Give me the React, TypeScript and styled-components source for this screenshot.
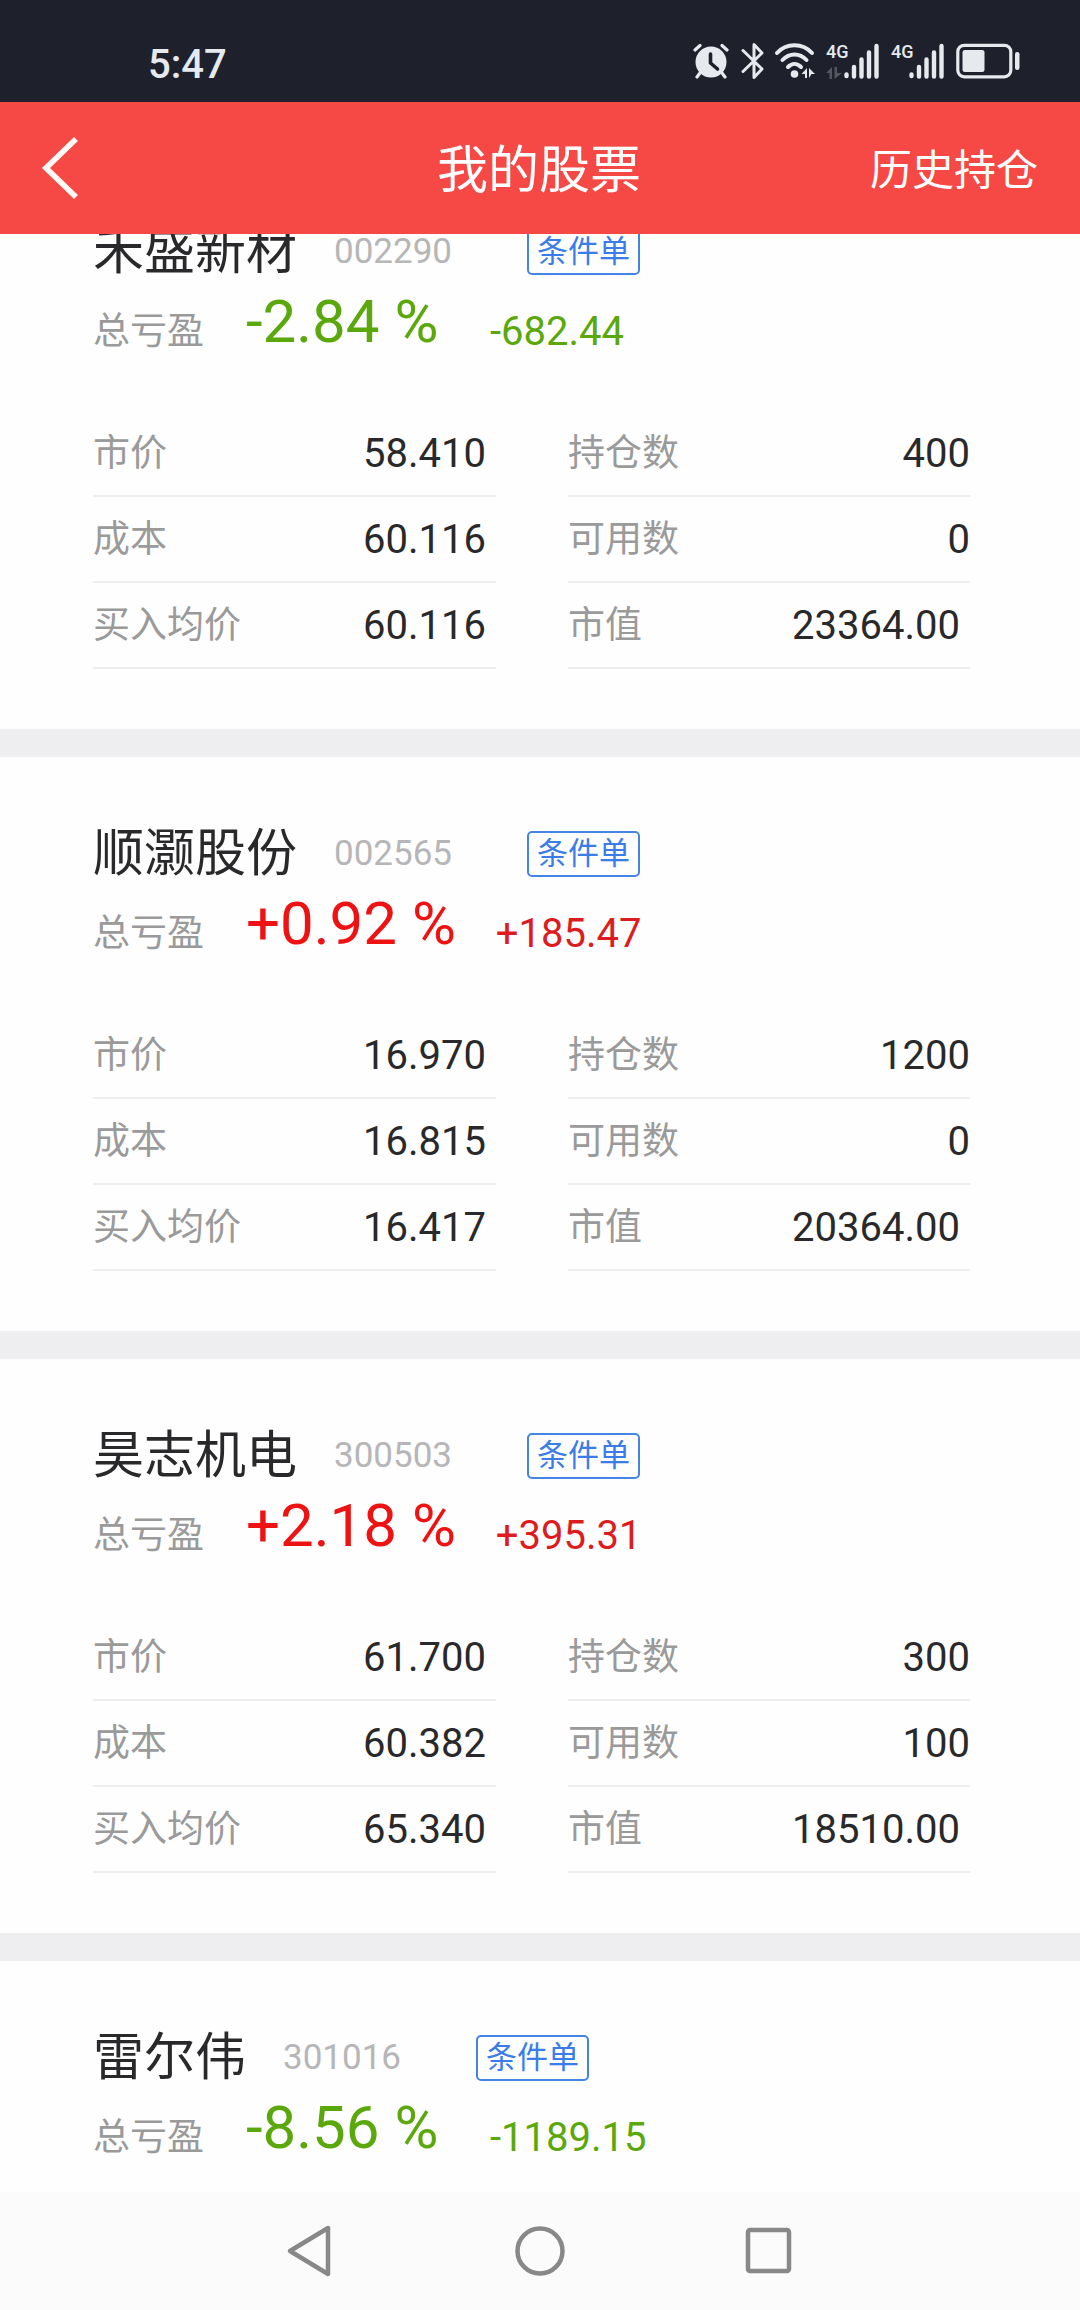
import React from "react";
import styled, { createGlobalStyle } from "styled-components";

const GlobalStyle = createGlobalStyle`
  * { box-sizing: border-box; }
  body { margin: 0; background: #fefefe; }
  button { margin: 0; padding: 0; border: 0; background: none; font: inherit; color: inherit; cursor: pointer; }
`;

const Screen = styled.div`
  display: flex;
  flex-direction: column;
  min-height: 100vh;
  font-family: Roboto, "Noto Sans CJK SC", sans-serif;
  color: #29292b;
`;

const Top = styled.div`
  position: sticky;
  top: 0;
  z-index: 1;
`;

const StatusBar = styled.div`
  display: flex;
  align-items: center;
  justify-content: space-between;
  height: 102px;
  padding: 24px 60px 0 148px;
  background: #1e212b;
  color: #e6eaef;
`;

const Clock = styled.span`
  padding-top: 4px;
  font-size: 40px;
  line-height: 52px;
  font-weight: 500;
`;

const StatusIcons = styled.div`
  display: flex;
  align-items: center;
  gap: 12px;
  padding-bottom: 4px;
`;

const Signal = styled.span`
  display: flex;
  align-items: flex-start;
  height: 36px;
`;

const NetworkStack = styled.span`
  display: flex;
  flex-direction: column;
  justify-content: space-between;
  height: 36px;
  width: 18px;
`;

const Network = styled.span`
  font-size: 18px;
  line-height: 18px;
  font-weight: 500;
`;

const Header = styled.header`
  display: grid;
  grid-template-columns: 1fr auto 1fr;
  align-items: center;
  height: 132px;
  padding: 0 42px 0 40px;
  background: #f64945;
  color: #fff;
`;

const BackButton = styled.button`
  justify-self: start;
  display: flex;
`;

const Title = styled.h1`
  margin: 0;
  padding-top: 6px;
  font-size: 51px;
  line-height: 68px;
  font-weight: 400;
`;

const HistoryButton = styled.button`
  && {
    justify-self: end;
    padding-top: 6px;
    font-size: 42px;
    line-height: 56px;
  }
`;

const List = styled.main`
  flex: 1;
  display: flex;
  flex-direction: column;
  gap: 28px;
  margin-top: -79px;
  background: #eeeef1;
`;

const Card = styled.article`
  padding: 63px 110px 60px 93px;
  background: #fefefe;

  &:last-child { flex: 1; padding-bottom: 24px; }
`;

const CardTitle = styled.div`
  display: flex;
  align-items: center;
  height: 68px;
`;

const Name = styled.h2`
  margin: 0;
  font-size: 51px;
  line-height: 68px;
  font-weight: 400;
`;

const Code = styled.span`
  margin: 0 75px 0 37px;
  font-size: 35px;
  line-height: 52px;
  color: #b6b6b8;
`;

const OrderButton = styled.button`
  && {
    height: 46px;
    padding: 0 8px;
    border: 2px solid #4484e4;
    border-radius: 5px;
    font-size: 31px;
    line-height: 42px;
    color: #3b7de8;
  }
`;

const Profit = styled.div`
  display: flex;
  align-items: flex-end;
  height: 72px;
`;

const Label = styled.span`
  font-size: 37px;
  line-height: 52px;
  color: #9a9a9a;
`;

const Percent = styled.strong<{ $up: boolean }>`
  min-width: 204px;
  margin: 0 40px 0 42px;
  font-size: 60px;
  line-height: 72px;
  font-weight: 400;
  color: ${(p) => (p.$up ? "#ee1212" : "#5ba80c")};
`;

const Amount = styled.span<{ $up: boolean }>`
  font-size: 40px;
  line-height: 52px;
  color: ${(p) => (p.$up ? "#dd1c1f" : "#5ba80c")};
`;

const Details = styled.div`
  display: grid;
  grid-template-columns: 403fr 402fr;
  column-gap: 72px;
  margin-top: 53px;
`;

const Fields = styled.dl`
  margin: 0;
`;

const Field = styled.div`
  display: flex;
  align-items: center;
  justify-content: space-between;
  height: 86px;
  padding-top: 2px;
  border-bottom: 2px solid #eeeeee;
`;

const Term = styled.dt`
  font-size: 37px;
  line-height: 52px;
  color: #9a9a9a;
`;

const Value = styled.dd<{ $inset?: boolean }>`
  margin: 0;
  padding-right: ${(p) => (p.$inset ? "10px" : "0")};
  font-size: 40px;
  line-height: 52px;
`;

const NavBar = styled.nav`
  position: sticky;
  bottom: 0;
  display: flex;
  align-items: center;
  justify-content: center;
  gap: 177px;
  height: 118px;
  background: #fbfbfb;
`;

const NavButton = styled.button`
  display: flex;
`;

type Stock = {
  name: string;
  code: string;
  percent: string;
  amount: string;
  price?: string;
  cost?: string;
  average?: string;
  held?: string;
  available?: string;
  worth?: string;
};

const stocks: Stock[] = [
  { name: "禾盛新材", code: "002290", percent: "-2.84 %", amount: "-682.44", price: "58.410", cost: "60.116", average: "60.116", held: "400", available: "0", worth: "23364.00" },
  { name: "顺灏股份", code: "002565", percent: "+0.92 %", amount: "+185.47", price: "16.970", cost: "16.815", average: "16.417", held: "1200", available: "0", worth: "20364.00" },
  { name: "昊志机电", code: "300503", percent: "+2.18 %", amount: "+395.31", price: "61.700", cost: "60.382", average: "65.340", held: "300", available: "100", worth: "18510.00" },
  { name: "雷尔伟", code: "301016", percent: "-8.56 %", amount: "-1189.15" },
];

function StockCard({ stock }: { stock: Stock }) {
  const up = stock.percent.startsWith("+");
  return (
    <Card>
      <CardTitle>
        <Name>{stock.name}</Name>
        <Code>{stock.code}</Code>
        <OrderButton>条件单</OrderButton>
      </CardTitle>
      <Profit>
        <Label>总亏盈</Label>
        <Percent $up={up}>{stock.percent}</Percent>
        <Amount $up={up}>{stock.amount}</Amount>
      </Profit>
      {stock.price && (
        <Details>
          <Fields>
            <Field><Term>市价</Term><Value $inset>{stock.price}</Value></Field>
            <Field><Term>成本</Term><Value $inset>{stock.cost}</Value></Field>
            <Field><Term>买入均价</Term><Value $inset>{stock.average}</Value></Field>
          </Fields>
          <Fields>
            <Field><Term>持仓数</Term><Value>{stock.held}</Value></Field>
            <Field><Term>可用数</Term><Value>{stock.available}</Value></Field>
            <Field><Term>市值</Term><Value $inset>{stock.worth}</Value></Field>
          </Fields>
        </Details>
      )}
    </Card>
  );
}

const AlarmIcon = () => (
  <svg width="36" height="36" viewBox="0 0 36 36" fill="none" strokeLinecap="round">
    <path d="M2 7l5-4.500M34 7l-5-4.500M7 30l-3 4M29 30l3 4" stroke="currentColor" strokeWidth="3.200" />
    <circle cx="18" cy="19" r="15.500" fill="currentColor" />
    <path d="M17.500 11v9l7 6" stroke="#1e212b" strokeWidth="3.600" strokeLinejoin="round" />
  </svg>
);

const BluetoothIcon = () => (
  <svg width="23" height="38" viewBox="0 0 23 38" fill="none" stroke="currentColor" strokeWidth="3" strokeLinecap="round" strokeLinejoin="round">
    <path d="M2 8.500L21 27 13 35.500V2.500L21 11 2 29.500" />
  </svg>
);

const WifiIcon = () => (
  <svg width="38" height="36" viewBox="1 0 38 36" overflow="visible" fill="none" stroke="currentColor" strokeWidth="4" strokeLinecap="round">
    <path d="M2 10C11-.5 28-.5 37 10M7.500 17C14.500 9.500 24.500 9.500 31.500 17M13 24c4-4 9-4 13 0" />
    <circle cx="19.500" cy="31" r="3.800" fill="currentColor" stroke="none" />
    <path d="M32 25v10h-2v-4h-3.500zM34 25l6 6h-3.500L34 35z" fill="currentColor" stroke="none" />
  </svg>
);

const BarsIcon = () => (
  <svg width="35" height="36" viewBox="0 0 35 36" fill="none" stroke="currentColor" strokeWidth="4.400" strokeLinecap="round">
    <path d="M2.500 31.500v1.500M10 24v9.500M17.500 16.500v17M25 9.500v24M32.500 3v30.500" />
  </svg>
);

const DataArrows = () => (
  <svg width="16" height="12" viewBox="0 0 16 12" fill="#54575e">
    <path d="M0 6l6-6v12H3.500V6zM8.500 0H11v6h5l-7.500 6z" />
  </svg>
);

const BatteryIcon = () => (
  <svg width="64" height="36" viewBox="0 0 64 36" fill="none">
    <rect x="1.800" y="2.300" width="53" height="31.500" rx="6.500" stroke="currentColor" strokeWidth="3.200" />
    <rect x="6.500" y="7" width="22" height="22" rx="2.500" fill="currentColor" />
    <rect x="59" y="9" width="4.500" height="18" rx="2.200" fill="currentColor" />
  </svg>
);

export default function App() {
  return (
    <Screen>
      <GlobalStyle />
      <Top>
        <StatusBar>
          <Clock>5:47</Clock>
          <StatusIcons>
            <AlarmIcon />
            <BluetoothIcon />
            <WifiIcon />
            <Signal>
              <NetworkStack><Network>4G</Network><DataArrows /></NetworkStack>
              <BarsIcon />
            </Signal>
            <Signal>
              <NetworkStack><Network>4G</Network></NetworkStack>
              <BarsIcon />
            </Signal>
            <BatteryIcon />
          </StatusIcons>
        </StatusBar>
        <Header>
          <BackButton aria-label="返回">
            <svg width="40" height="64" viewBox="0 0 40 64" fill="none" stroke="#fffaf5" strokeWidth="5.600">
              <path d="M36 3L6 32l30 29" />
            </svg>
          </BackButton>
          <Title>我的股票</Title>
          <HistoryButton>历史持仓</HistoryButton>
        </Header>
      </Top>
      <List>
        {stocks.map((s) => <StockCard key={s.code} stock={s} />)}
      </List>
      <NavBar>
        <NavButton aria-label="返回">
          <svg width="50" height="54" viewBox="0 0 50 54" fill="none" stroke="#888" strokeWidth="4.500" strokeLinejoin="round">
            <path d="M4 27L42 4v46z" />
          </svg>
        </NavButton>
        <NavButton aria-label="主页">
          <svg width="54" height="54" viewBox="0 0 54 54" fill="none" stroke="#888" strokeWidth="4.500">
            <circle cx="27" cy="27" r="22.500" />
          </svg>
        </NavButton>
        <NavButton aria-label="最近任务">
          <svg width="50" height="54" viewBox="0 0 50 54" fill="none" stroke="#888" strokeWidth="4.500">
            <rect x="4" y="6" width="41" height="41" rx="2" />
          </svg>
        </NavButton>
      </NavBar>
    </Screen>
  );
}
